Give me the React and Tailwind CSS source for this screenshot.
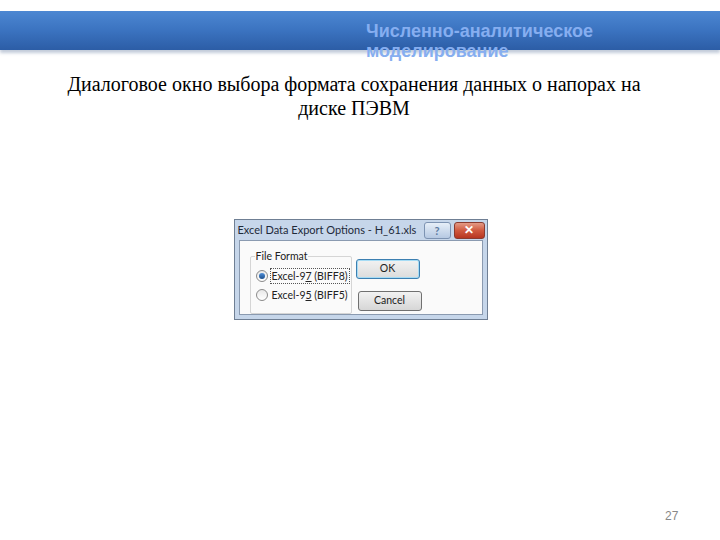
import React from "react";

const Radio = ({ checked }) => (
  <span className="shrink-0 w-[12px] h-[12px] rounded-full border border-[#8a8a8a] bg-gradient-to-b from-[#e8e8e8] to-[#ffffff] flex items-center justify-center">
    {checked && <span className="w-[6px] h-[6px] rounded-full bg-gradient-to-b from-[#4f8fd8] to-[#1d4f8c]" />}
  </span>
);

export default function App() {
  return (
    <div className="w-[720px] h-[540px] bg-white relative overflow-hidden">
      {/* top bar */}
      <div className="mt-[11px] h-[39px] bg-gradient-to-b from-[#4c87d2] via-[#3b73c0] to-[#2c5da6] shadow-[0_3px_3px_rgba(120,140,170,0.45)] relative">
        <div
          className="absolute left-[366px] top-[10px] text-[18px] leading-[20px] font-bold text-[#86aef0] whitespace-nowrap"
          style={{ fontFamily: '"Liberation Sans", Arial, sans-serif' }}
        >
          <div>Численно-аналитическое</div>
          <div>моделирование</div>
        </div>
      </div>

      {/* heading */}
      <div
        className="mt-[22px] text-center text-[20px] leading-[24px] text-black pl-[58px] pr-[70px]"
        style={{ fontFamily: '"Liberation Serif", "Times New Roman", serif' }}
      >
        Диалоговое окно выбора формата сохранения данных о напорах на диске ПЭВМ
      </div>

      {/* dialog */}
      <div className="flex justify-center mt-[99px] pl-[1px]">
        <div
          className="w-[254px] h-[101px] border border-[#6f7f94] bg-[#c6d6ea] flex flex-col whitespace-nowrap"
          style={{ fontFamily: 'Lato, "Open Sans", sans-serif' }}
        >
          <div className="h-[22px] flex items-center justify-between pl-[3px] pr-[2px]">
            <span className="text-[11px] text-[#1e2a3a]">Excel Data Export Options - H_61.xls</span>
            <div className="flex items-center gap-[3px]">
              <div className="w-[27px] h-[17px] rounded-[3px] border border-[#7d93b2] bg-gradient-to-b from-[#e6eef8] to-[#b6c9e2] flex items-center justify-center text-[11px] font-bold text-[#5b7aa0] leading-none">?</div>
              <div className="w-[31px] h-[17px] rounded-[3px] border border-[#8a3b30] bg-gradient-to-b from-[#e39a86] via-[#d0593f] to-[#b73520] flex items-center justify-center text-[12px] font-bold text-white leading-none">✕</div>
            </div>
          </div>
          <div className="flex-1 mx-[4px] mb-[4px] border border-[#8a9ab0] bg-[#fafafa] flex pt-[5px] pl-[10px]">
            <div className="relative mt-[10px] w-[102px] h-[58px] border border-[#d5d5d5] rounded-[2px] shrink-0">
              <span className="absolute -top-[8px] left-[4px] bg-[#fafafa] px-[1px] text-[10.5px] leading-[14px] text-[#222]">File Format</span>
              <div className="flex flex-col gap-[4px] pl-[5px] pt-[11px] text-[10.5px] text-[#222] leading-[14px]">
                <div className="flex items-center gap-[2px]">
                  <Radio checked />
                  <span className="border border-dotted border-[#555] px-[1px]">
                    Excel-9<span className="underline">7</span> (BIFF8)
                  </span>
                </div>
                <div className="flex items-center gap-[3px]">
                  <Radio />
                  <span className="px-[1px]">
                    Excel-9<span className="underline">5</span> (BIFF5)
                  </span>
                </div>
              </div>
            </div>
            <div className="flex flex-col ml-[4px] mt-[13px] gap-[12px]">
              <div className="w-[64px] h-[20px] rounded-[3px] border border-[#3c7fb1] bg-gradient-to-b from-[#f2f2f2] to-[#dcdcdc] shadow-[inset_0_0_0_1px_#a6dcf5] flex items-center justify-center text-[10.5px] text-[#222]">OK</div>
              <div className="w-[64px] h-[20px] ml-[2px] rounded-[3px] border border-[#707070] bg-gradient-to-b from-[#f2f2f2] to-[#d6d6d6] flex items-center justify-center text-[10.5px] text-[#222]">Cancel</div>
            </div>
          </div>
        </div>
      </div>

      <div
        className="absolute left-[665px] top-[507px] text-[12px] text-[#888]"
        style={{ fontFamily: '"Liberation Sans", Arial, sans-serif' }}
      >
        27
      </div>
    </div>
  );
}
